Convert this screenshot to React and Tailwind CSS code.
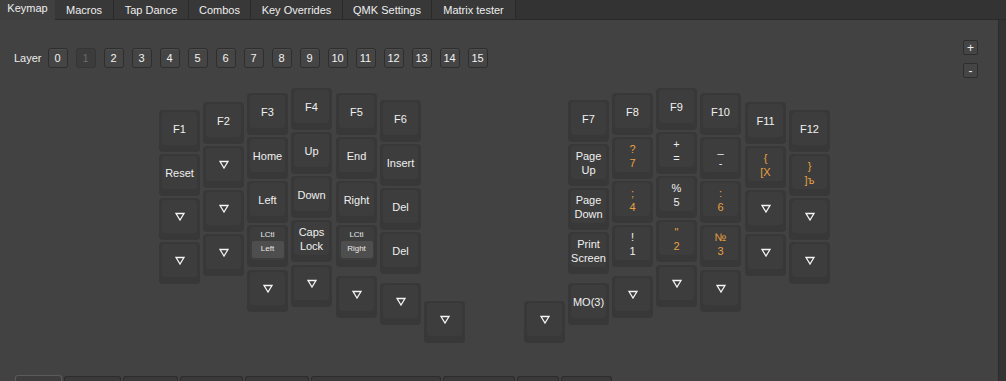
const tabs = ['Keymap', 'Macros', 'Tap Dance', 'Combos', 'Key Overrides', 'QMK Settings', 'Matrix tester']
const tabWidths = [55, 59, 75, 62, 92, 89, 84]
const layers = Array.from({ length: 16 }, (_, i) => i)
const bottomTabs = [47, 57, 55, 63, 64, 130, 72, 42, 51]

const O = 'text-[#e8a040]'

// key positions in page pixels (top-left of the key)
const keys = [
  { x: 159, y: 110, a: 'F1' },
  { x: 159, y: 154, a: 'Reset' },
  { x: 159, y: 198 },
  { x: 159, y: 242 },
  { x: 203, y: 102, a: 'F2' },
  { x: 203, y: 146 },
  { x: 203, y: 190 },
  { x: 203, y: 234 },
  { x: 247, y: 93, a: 'F3' },
  { x: 247, y: 137, a: 'Home' },
  { x: 247, y: 181, a: 'Left' },
  { x: 247, y: 225, mod: 'Left' },
  { x: 247, y: 270 },
  { x: 291, y: 88, a: 'F4' },
  { x: 291, y: 132, a: 'Up' },
  { x: 291, y: 176, a: 'Down' },
  { x: 291, y: 220, a: 'Caps', b: 'Lock' },
  { x: 291, y: 265 },
  { x: 336, y: 93, a: 'F5' },
  { x: 336, y: 137, a: 'End' },
  { x: 336, y: 181, a: 'Right' },
  { x: 336, y: 225, mod: 'Right' },
  { x: 336, y: 276 },
  { x: 380, y: 100, a: 'F6' },
  { x: 380, y: 144, a: 'Insert' },
  { x: 380, y: 188, a: 'Del' },
  { x: 380, y: 232, a: 'Del' },
  { x: 380, y: 283 },
  { x: 424, y: 301 },

  { x: 524, y: 301 },
  { x: 568, y: 100, a: 'F7' },
  { x: 568, y: 144, a: 'Page', b: 'Up' },
  { x: 568, y: 188, a: 'Page', b: 'Down' },
  { x: 568, y: 232, a: 'Print', b: 'Screen' },
  { x: 568, y: 283, a: 'MO(3)' },
  { x: 612, y: 93, a: 'F8' },
  { x: 612, y: 137, a: '?', b: '7', c: O },
  { x: 612, y: 181, a: ';', b: '4', c: O },
  { x: 612, y: 225, a: '!', b: '1' },
  { x: 612, y: 276 },
  { x: 656, y: 88, a: 'F9' },
  { x: 656, y: 132, a: '+', b: '=' },
  { x: 656, y: 176, a: '%', b: '5' },
  { x: 656, y: 220, a: '"', b: '2', c: O },
  { x: 656, y: 265 },
  { x: 700, y: 93, a: 'F10' },
  { x: 700, y: 137, a: '_', b: '-' },
  { x: 700, y: 181, a: ':', b: '6', c: O },
  { x: 700, y: 225, a: '№', b: '3', c: O },
  { x: 700, y: 270 },
  { x: 745, y: 102, a: 'F11' },
  { x: 745, y: 146, a: '{', b: '[Х', c: O },
  { x: 745, y: 190 },
  { x: 745, y: 234 },
  { x: 789, y: 110, a: 'F12' },
  { x: 789, y: 154, a: '}', b: ']ъ', c: O },
  { x: 789, y: 198 },
  { x: 789, y: 242 },
]

function Tri() {
  return (
    <svg width="10" height="9" viewBox="0 0 10 9">
      <path d="M1 1.5 H9 L5 8 Z" fill="none" stroke="#f4f4f4" strokeWidth="1.3" strokeLinejoin="miter" />
    </svg>
  )
}

function Key({ k }) {
  return (
    <div
      className="absolute h-[42px] w-[41px] rounded-[4px] bg-[#383838] pt-[2px] pl-[3px]"
      style={{ left: k.x, top: k.y - 20 }}
    >
      <div className={`flex h-[33px] w-[35px] flex-col items-center justify-center rounded-[3px] bg-[#3d3d3d] text-center text-[11px] leading-[14px] ${k.c || 'text-[#f0f0f0]'}`}>
        {k.mod ? (
          <>
            <span className="text-[8px] leading-[10px] text-[#e8e8e8]">LCtl</span>
            <span className="mt-[1px] flex h-[17px] w-[32px] items-center justify-center rounded-[2px] bg-[#4e4e4e] text-[8px] leading-[10px] text-[#e8e8e8]">
              {k.mod}
            </span>
          </>
        ) : k.a ? (
          <>
            <span>{k.a}</span>
            {k.b ? <span>{k.b}</span> : null}
          </>
        ) : (
          <Tri />
        )}
      </div>
    </div>
  )
}

export default function App() {
  return (
    <div className="relative flex h-[381px] w-[1006px] flex-col overflow-hidden bg-[#333333] font-['Liberation_Sans',Arial,sans-serif] text-[11px] text-[#eeeeee]">
      <div className="flex h-[20px] shrink-0">
        {tabs.map((tab, i) => (
          <div
            key={tab}
            style={{ width: tabWidths[i] }}
            className={
              i === 0
                ? 'flex h-[20px] items-center justify-center bg-[#404040] pb-[3px]'
                : 'flex h-[20px] items-center justify-center border-r border-b border-[#2a2a2a] bg-[#383838] pt-[1px]'
            }
          >
            {tab}
          </div>
        ))}
        <div className="flex-1 border-b border-[#2a2a2a]" />
      </div>

      <div className="relative flex-1 w-[999px] border-r border-[#2c2c2c] bg-[#424242]">
        <div className="flex items-center pt-[28px] pl-[14px]">
          <span className="mr-[6px]">Layer</span>
          <div className="flex gap-[8px]">
            {layers.map((l) => (
              <div
                key={l}
                className={
                  l === 1
                    ? 'flex h-[20px] w-[20px] items-center justify-center rounded-[3px] border border-[#353535] bg-[#3c3c3c] text-[#6a6a6a]'
                    : 'flex h-[20px] w-[20px] items-center justify-center rounded-[3px] border border-[#2e2e2e] bg-[#454545] text-[#f2f2f2] shadow-[inset_0_1px_0_#4e4e4e]'
                }
              >
                {l}
              </div>
            ))}
          </div>
        </div>

        <div className="absolute top-[20px] right-[20px] flex flex-col gap-[8px]">
          <div className="flex h-[15px] w-[15px] items-center justify-center rounded-[2px] border border-[#2e2e2e] bg-[#454545] text-[12px] leading-none">+</div>
          <div className="flex h-[15px] w-[15px] items-center justify-center rounded-[2px] border border-[#2e2e2e] bg-[#454545] text-[12px] leading-none">-</div>
        </div>

        {keys.map((k, i) => (
          <Key key={i} k={k} />
        ))}

        <div className="absolute bottom-0 left-[15px] flex gap-[2px]">
          {bottomTabs.map((w, i) => (
            <div
              key={i}
              style={{ width: w }}
              className={
                i === 0
                  ? 'h-[6px] rounded-t-[3px] border border-b-0 border-[#5a5a5a] bg-[#3d3d3d]'
                  : 'mt-[1px] h-[5px] rounded-t-[3px] border border-b-0 border-[#2c2c2c] bg-[#3a3a3a]'
              }
            />
          ))}
        </div>
      </div>
    </div>
  )
}
